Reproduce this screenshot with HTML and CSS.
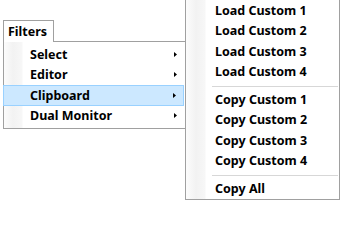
FILE: index.html
```html
<!DOCTYPE html>
<html>
<head>
<meta charset="utf-8">
<link rel="stylesheet" href="styles.css">
</head>
<body>
<div class="stage">
  <div class="menubar">
    <div class="tab">Filters</div>
    <div class="menu">
      <div class="item"><span class="label">Select</span><svg class="arrow" width="3" height="5" viewBox="0 0 3 5"><polygon points="0,0 3,2.5 0,5"/></svg></div>
      <div class="item"><span class="label">Editor</span><svg class="arrow" width="3" height="5" viewBox="0 0 3 5"><polygon points="0,0 3,2.5 0,5"/></svg></div>
      <div class="item active"><span class="label">Clipboard</span><svg class="arrow" width="3" height="5" viewBox="0 0 3 5"><polygon points="0,0 3,2.5 0,5"/></svg></div>
      <div class="item"><span class="label">Dual Monitor</span><svg class="arrow" width="3" height="5" viewBox="0 0 3 5"><polygon points="0,0 3,2.5 0,5"/></svg></div>
    </div>
  </div>
  <div class="submenu">
    <div class="sitem">Load Custom 1</div>
    <div class="sitem">Load Custom 2</div>
    <div class="sitem">Load Custom 3</div>
    <div class="sitem">Load Custom 4</div>
    <div class="sep"></div>
    <div class="sitem">Copy Custom 1</div>
    <div class="sitem">Copy Custom 2</div>
    <div class="sitem">Copy Custom 3</div>
    <div class="sitem">Copy Custom 4</div>
    <div class="sep"></div>
    <div class="sitem">Copy All</div>
  </div>
</div>
</body>
</html>
```
FILE: styles.css
```css
html, body {
  margin: 0;
  padding: 0;
  background: #ffffff;
  overflow: hidden;
}
body {
  width: 341px;
  height: 200px;
  font-family: "Noto Sans", "Open Sans", sans-serif;
  font-weight: bold;
  font-size: 12.5px;
  color: #000000;
}
.stage {
  display: flex;
  align-items: flex-start;
}
.menubar {
  margin-left: 3px;
  margin-top: 20px;
  display: flex;
  flex-direction: column;
  width: 182px;
}
.tab {
  position: relative;
  z-index: 2;
  width: 51px;
  height: 22px;
  box-sizing: border-box;
  border: 1px solid #a0a0a0;
  border-bottom: none;
  background: #ffffff;
  padding-left: 4px;
  line-height: 21px;
  margin-bottom: -1px;
}
.menu {
  border: 1px solid #a0a0a0;
  border-right: none;
  padding: 2px 0 2px 0;
  background: linear-gradient(to right, #fcfcfc 0px, #f2f2f2 9px, #f7f7f7 18px, #ffffff 19px);
}
.item {
  height: 20.5px;
  display: flex;
  align-items: center;
  padding-left: 26px;
  padding-right: 8px;
  box-sizing: border-box;
}
.item .label {
  flex: 1;
}
.item.active {
  background: #cce8ff;
  border: 1px solid #99d1ff;
  margin-left: -1px;
  margin-right: 1px;
  padding-left: 26px;
  padding-right: 7px;
}
.arrow {
  display: block;
  fill: #000000;
}
.submenu {
  margin-top: -1px;
  width: 155px;
  box-sizing: border-box;
  border: 1px solid #a0a0a0;
  padding-top: 0.5px;
  background: linear-gradient(to right, #fcfcfc 0px, #f2f2f2 10px, #f7f7f7 19px, #ffffff 20px);
}
.sitem {
  height: 20.5px;
  line-height: 20.5px;
  padding-left: 29px;
}
.sep {
  height: 7px;
  display: flex;
  align-items: center;
  padding-left: 26px;
  padding-right: 1px;
}
.sep::after {
  content: "";
  flex: 1;
  height: 1px;
  background: #d7d7d7;
}
```
